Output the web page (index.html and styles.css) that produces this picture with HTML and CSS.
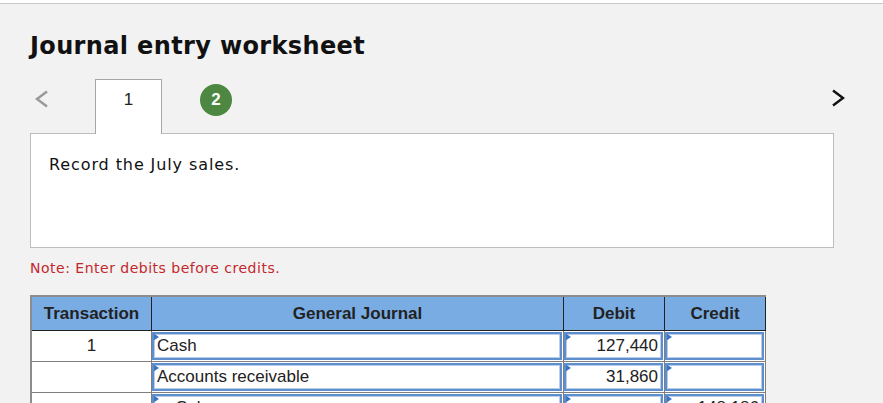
FILE: index.html
```html
<!DOCTYPE html>
<html lang="en">
<head>
    <meta charset="UTF-8">
    <meta name="viewport" content="width=device-width, initial-scale=1.0">
    <title>Journal entry worksheet</title>
    <link rel="stylesheet" href="styles.css">
</head>
<body>
    <div class="page">
        <h1 class="title">Journal entry worksheet</h1>

        <div class="tabs">
            <svg class="chevron" width="14" height="18" viewBox="0 0 14 18">
                <polyline points="12,1.5 2,9 12,16.5" fill="none" stroke="#999" stroke-width="2.4"/>
            </svg>
            <div class="tab active">1</div>
            <div class="step-done">2</div>
            <div class="spacer"></div>
            <svg class="chevron next" width="14" height="18" viewBox="0 0 14 18">
                <polyline points="2,1.5 12,9 2,16.5" fill="none" stroke="#111" stroke-width="2.4"/>
            </svg>
        </div>

        <div class="prompt">Record the July sales.</div>

        <p class="note">Note: Enter debits before credits.</p>

        <table class="journal">
            <thead>
                <tr>
                    <th class="col-tr">Transaction</th>
                    <th class="col-gj">General Journal</th>
                    <th class="col-amt">Debit</th>
                    <th class="col-amt">Credit</th>
                </tr>
            </thead>
            <tbody>
                <tr>
                    <td class="num">1</td>
                    <td><div class="field">Cash</div></td>
                    <td><div class="field amt">127,440</div></td>
                    <td><div class="field amt"></div></td>
                </tr>
                <tr>
                    <td class="num"></td>
                    <td><div class="field">Accounts receivable</div></td>
                    <td><div class="field amt">31,860</div></td>
                    <td><div class="field amt"></div></td>
                </tr>
                <tr>
                    <td class="num"></td>
                    <td><div class="field indent">Sales</div></td>
                    <td><div class="field amt"></div></td>
                    <td><div class="field amt">148,186</div></td>
                </tr>
            </tbody>
        </table>
    </div>
</body>
</html>
```

FILE: styles.css
```css
html {
    background: #fff;
}
body {
    margin: 0;
    padding-top: 3px;
    font-family: "DejaVu Sans", Verdana, sans-serif;
}
.page {
    border-top: 1px solid #c9c9c9;
    background: #f2f2f2;
    padding: 0 38px 40px 30px;
    min-height: 420px;
}
.title {
    margin: 0;
    padding-top: 27px;
    font-size: 24px;
    line-height: 30px;
    font-weight: bold;
    letter-spacing: 0.36px;
    color: #111;
}
.tabs {
    display: flex;
    align-items: flex-start;
    margin-top: 18px;
    height: 54px;
}
.chevron {
    margin: 11px 0 0 5px;
}
.chevron.next {
    margin: 10px 0 0 0;
}
.tab {
    width: 65px;
    height: 54px;
    margin-left: 46px;
    border: 1px solid #a6a6a6;
    border-bottom: none;
    background: #fff;
    text-align: center;
    font-family: "Liberation Sans", Arial, sans-serif;
    font-size: 17px;
    line-height: 40px;
    color: #222;
    position: relative;
    z-index: 1;
}
.step-done {
    width: 32px;
    height: 32px;
    margin: 5px 0 0 38px;
    border-radius: 50%;
    background: #4d8742;
    color: #fff;
    text-align: center;
    font-family: "Liberation Sans", Arial, sans-serif;
    font-weight: bold;
    font-size: 17px;
    line-height: 32px;
}
.spacer {
    flex: 1;
}
.prompt {
    width: 766px;
    height: 113px;
    padding: 0 18px;
    border: 1px solid #bdbdbd;
    background: #fff;
    font-size: 16px;
    letter-spacing: 0.9px;
    line-height: 62px;
    color: #111;
}
.note {
    margin: 10px 0 0;
    font-size: 14px;
    letter-spacing: 0.5px;
    line-height: 20px;
    color: #c4272c;
}
.journal {
    margin-top: 17px;
    width: 736px;
    border-collapse: collapse;
    border-top: 2px solid #8c8c8c;
    border-left: 2px solid #8c8c8c;
    font-family: "Liberation Sans", Arial, sans-serif;
    font-size: 17px;
    color: #222;
    background: #fff;
}
.journal th {
    height: 33px;
    padding: 0;
    background: #79ace3;
    border-right: 1px solid #222;
    border-bottom: 1px solid #222;
    font-weight: bold;
}
.col-tr {
    width: 119px;
}
.col-amt {
    width: 100px;
}
.journal td {
    height: 30px;
    padding: 0;
    border-bottom: 1px solid #7f7f7f;
    border-right: 1px solid #7f7f7f;
    vertical-align: top;
}
.journal td.num {
    text-align: center;
    line-height: 29px;
}
.field {
    position: relative;
    height: 24px;
    margin: 1px 1px 0 0;
    padding: 0 3px;
    border: 2px solid #5d8fcf;
    box-shadow: inset 0 0 0 1px #b7cdeb;
    line-height: 24px;
    white-space: nowrap;
    overflow: hidden;
}
.field::before {
    content: "";
    position: absolute;
    left: -1px;
    top: -1px;
    border-top: 4px solid transparent;
    border-bottom: 4px solid transparent;
    border-left: 6px solid #3b75c2;
}
.field.amt {
    text-align: right;
}
.field.indent {
    padding-left: 22px;
}
```
